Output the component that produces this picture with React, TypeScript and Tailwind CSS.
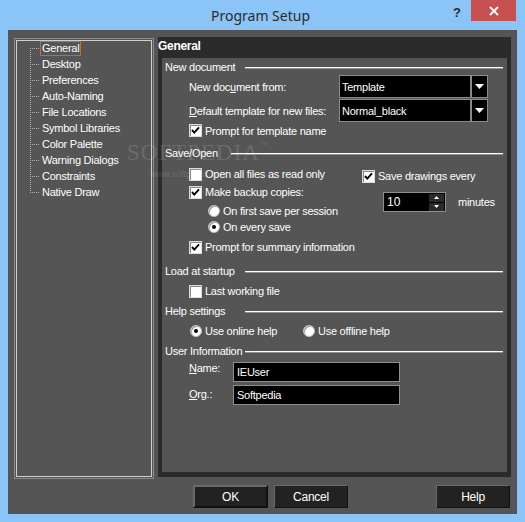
import React from "react";

const txt = "text-[11px] tracking-[-0.25px] text-white leading-[12px] whitespace-nowrap";

function Check({ on }: { on?: boolean }) {
  return (
    <div className="w-[13px] h-[13px] shrink-0 bg-white border border-[#dcdcdc] shadow-[inset_1px_1px_0_#8a8a8a] flex items-center justify-center">
      {on && (
        <svg width="11" height="11" viewBox="0 0 11 11">
          <polyline points="2,5 4.3,7.6 9,2.4" fill="none" stroke="#000" strokeWidth="1.9" />
        </svg>
      )}
    </div>
  );
}

function Radio({ on }: { on?: boolean }) {
  return (
    <div className="w-[12px] h-[12px] shrink-0 rounded-full bg-white border border-[#bdbdbd] shadow-[inset_1px_1px_0_#9a9a9a] flex items-center justify-center">
      {on && <div className="w-[4px] h-[4px] rounded-full bg-black" />}
    </div>
  );
}

function CheckRow({ on, label, className = "" }: { on?: boolean; label: string; className?: string }) {
  return (
    <div className={"flex items-center h-[16px] gap-[3px] " + className}>
      <Check on={on} />
      <span className={txt}>{label}</span>
    </div>
  );
}

function RadioRow({ on, label, className = "" }: { on?: boolean; label: string; className?: string }) {
  return (
    <div className={"flex items-center h-[16px] gap-[3px] " + className}>
      <Radio on={on} />
      <span className={txt}>{label}</span>
    </div>
  );
}

function Section({ label, w, className = "" }: { label: string; w: string; className?: string }) {
  return (
    <div className={"flex items-center h-[16px] pl-[3px] " + className}>
      <span className={txt + " " + w}>{label}</span>
      <div className="flex-1 mr-[4px] mt-[2px] border-t border-t-white border-b border-b-[#8f8f8f]" />
    </div>
  );
}

function Dropdown({ value }: { value: string }) {
  return (
    <div className="flex h-[23px]">
      <div className="w-[132px] h-full bg-black border border-[#8a8a8a] flex items-center pl-[2px]">
        <span className={txt}>{value}</span>
      </div>
      <div className="w-[17px] h-full bg-black border border-[#8a8a8a] flex items-center justify-center">
        <svg width="9" height="5" viewBox="0 0 9 5">
          <polygon points="0,0 9,0 4.5,5" fill="#fff" />
        </svg>
      </div>
    </div>
  );
}

const treeItems = [
  "General",
  "Desktop",
  "Preferences",
  "Auto-Naming",
  "File Locations",
  "Symbol Libraries",
  "Color Palette",
  "Warning Dialogs",
  "Constraints",
  "Native Draw",
];

function Tree() {
  return (
    <div className="w-[140px] h-[441px] mt-[1px] border border-[#8c8c8c] p-px">
      <div className="w-full h-full border border-[#cfcfcf]">
        <div className="flex -mt-px">
          <svg width="23" height="160" viewBox="0 0 23 160" shapeRendering="crispEdges">
            <line x1="13.5" y1="8" x2="13.5" y2="153" stroke="#b0b0b0" strokeDasharray="1 1" />
            {treeItems.map((_, i) => (
              <line key={i} x1="15" y1={8.5 + 16 * i} x2="23" y2={8.5 + 16 * i} stroke="#b0b0b0" strokeDasharray="1 1" />
            ))}
          </svg>
          <div className="flex flex-col">
            {treeItems.map((t, i) => (
              <div key={t} className="h-[16px] flex items-center">
                <div
                  className={
                    "h-[15px] px-px flex items-center border " +
                    (i === 0 ? "border-[#b8712f]" : "border-transparent")
                  }
                >
                  <span className={txt}>{t}</span>
                </div>
              </div>
            ))}
          </div>
        </div>
      </div>
    </div>
  );
}

function Button({ label, className = "" }: { label: string; className?: string }) {
  return (
    <div
      className={
        "h-[23px] bg-[#222222] flex items-center justify-center border border-t-[#6a6a6a] border-l-[#6a6a6a] border-b-[#111111] border-r-[#111111] " +
        className
      }
    >
      <span className={txt + " text-[12px]"}>{label}</span>
    </div>
  );
}

export default function App() {
  return (
    <div className="relative w-[525px] h-[522px] bg-[#8bc5f7] flex flex-col font-['Liberation_Sans',Arial,sans-serif] overflow-hidden">
      {/* Title bar */}
      <div className="relative h-[30px] flex items-center justify-center">
        <span className="font-['Noto_Sans',sans-serif] text-[14px] text-[#2b2b2b] ml-[-4px] mt-[1px]">Program Setup</span>
        <span className="absolute left-[453px] top-[3px] font-['Liberation_Sans',sans-serif] font-bold text-[13px] text-[#2b2b2b]">?</span>
        <div className="absolute right-[9px] top-0 w-[45px] h-[21px] bg-[#c75050] flex items-center justify-center">
          <svg width="10" height="10" viewBox="0 0 10 10">
            <path d="M1 1 L9 9 M9 1 L1 9" stroke="#fff" strokeWidth="1.8" />
          </svg>
        </div>
      </div>

      {/* Client */}
      <div className="mx-[8px] h-[484px] bg-[#555555] px-[6px] pt-[7px] flex flex-col">
        <div className="flex gap-[4px]">
          <Tree />
          {/* Right panel */}
          <div className="w-[353px] h-[440px] bg-[#2b2b2b] flex flex-col pb-[5px]">
            <div className="h-[21px] flex items-start pt-[3px]">
              <span className="text-[12px] font-bold tracking-[-0.3px] text-white leading-[12px]">General</span>
            </div>
            <div className="mx-[4px] flex-1 bg-[#555555] flex flex-col">
              <Section label="New document" w="w-[80px]" className="mt-[1px]" />
              <div className="flex items-center pl-[27px]">
                <span className={txt + " w-[150px]"}>
                  New doc<u>u</u>ment from:
                </span>
                <Dropdown value="Template" />
              </div>
              <div className="flex items-center pl-[27px] mt-[1px]">
                <span className={txt + " w-[150px]"}>
                  <u>D</u>efault template for new files:
                </span>
                <Dropdown value="Normal_black" />
              </div>
              <CheckRow on label="Prompt for template name" className="pl-[27px] h-[17px]" />

              <Section label="Save/Open" w="w-[66px]" className="mt-[6px]" />
              <div className="flex pl-[27px] mt-[5px]">
                <div className="w-[173px] flex flex-col">
                  <CheckRow label="Open all files as read only" />
                  <CheckRow on label="Make backup copies:" className="mt-[2px]" />
                  <RadioRow label="On first save per session" className="pl-[19px] mt-[3px]" />
                  <RadioRow on label="On every save" className="pl-[19px]" />
                </div>
                <div className="flex flex-col">
                  <CheckRow on label="Save drawings every" className="mt-[2px]" />
                  <div className="flex items-center mt-[8px]">
                    <div className="ml-[21px] w-[63px] h-[20px] bg-black border border-[#8f8f8f] flex items-center justify-between pl-[3px] pr-[1px]">
                      <span className="text-[12px] text-white leading-[12px]">10</span>
                      <div className="flex flex-col gap-px">
                        <div className="w-[15px] h-[8px] bg-[#2a2a2a] flex items-center justify-center">
                          <svg width="5" height="3" viewBox="0 0 5 3">
                            <polygon points="2.5,0 5,3 0,3" fill="#fff" />
                          </svg>
                        </div>
                        <div className="w-[15px] h-[8px] bg-[#2a2a2a] flex items-center justify-center">
                          <svg width="5" height="3" viewBox="0 0 5 3">
                            <polygon points="0,0 5,0 2.5,3" fill="#fff" />
                          </svg>
                        </div>
                      </div>
                    </div>
                    <span className={txt + " ml-[12px]"}>minutes</span>
                  </div>
                </div>
              </div>
              <CheckRow on label="Prompt for summary information" className="pl-[27px] mt-[4px]" />

              <Section label="Load at startup" w="w-[80px]" className="mt-[8px]" />
              <CheckRow label="Last working file" className="pl-[27px] mt-[4px]" />

              <Section label="Help settings" w="w-[80px]" className="mt-[4px]" />
              <div className="flex pl-[28px] mt-[4px]">
                <RadioRow on label="Use online help" className="w-[113px]" />
                <RadioRow label="Use offline help" />
              </div>

              <Section label="User Information" w="w-[80px]" className="mt-[4px]" />
              <div className="flex pl-[27px] mt-[3px]">
                <span className={txt + " w-[44px]"}>
                  <u>N</u>ame:
                </span>
                <div className="w-[167px] h-[20px] bg-black border border-[#8f8f8f] flex items-center pl-[3px]">
                  <span className={txt}>IEUser</span>
                </div>
              </div>
              <div className="flex pl-[27px] mt-[3px]">
                <span className={txt + " w-[44px] pt-[3px]"}>
                  <u>O</u>rg.:
                </span>
                <div className="w-[167px] h-[20px] bg-black border border-[#8f8f8f] flex items-center pl-[3px]">
                  <span className={txt}>Softpedia</span>
                </div>
              </div>
            </div>
          </div>
        </div>

        {/* Buttons */}
        <div className="flex mt-[6px]">
          <Button label="OK" className="ml-[179px] w-[75px] border-2 border-[#141414]" />
          <Button label="Cancel" className="ml-[6px] w-[74px]" />
          <Button label="Help" className="ml-auto mr-[1px] w-[74px]" />
        </div>
      </div>

      {/* Watermark */}
      <div className="absolute left-[127px] top-[141px] pointer-events-none text-white/15 font-['Liberation_Serif',serif] text-[23px] tracking-[1px] leading-none">
        SOFTPEDIA<span className="text-[8px] align-top">™</span>
      </div>
      <div className="absolute left-[150px] top-[170px] pointer-events-none text-white/15 font-['Liberation_Sans',sans-serif] text-[9px] leading-none">
        www.softpedia.com
      </div>
    </div>
  );
}
